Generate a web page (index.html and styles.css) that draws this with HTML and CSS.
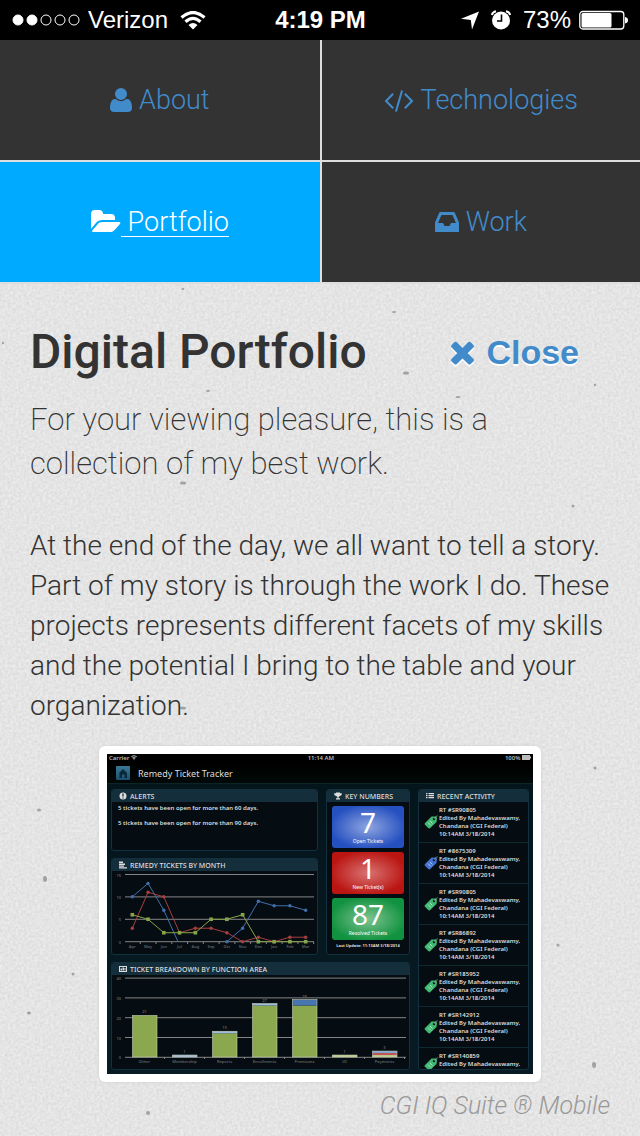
FILE: index.html
```
<!DOCTYPE html>
<html lang="en">
<head>
<meta charset="utf-8">
<meta name="viewport" content="width=device-width, initial-scale=1">
<title>Digital Portfolio</title>
<link rel="stylesheet" href="styles.css">
</head>
<body>
<div class="status">
  <div class="status-left">
    <svg class="signal" viewBox="0 0 68 12" width="68" height="12" aria-hidden="true">
      <g fill="#fff" stroke="#fff"><circle cx="6" cy="6" r="5"/><circle cx="20" cy="6" r="5"/><g fill="none"><circle cx="34" cy="6" r="5"/><circle cx="48" cy="6" r="5"/><circle cx="62" cy="6" r="5"/></g></g>
    </svg>
    <span>Verizon</span>
    <svg class="wifi" viewBox="0 0 26 19" width="26" height="19" aria-hidden="true">
      <path d="M1.5 6.5Q13-3.5 24.500 6.500M5.500 10.700Q13 4 20.500 10.700" fill="none" stroke="#fff" stroke-width="3.200"/>
      <path d="M8.500 14Q13 10 17.500 14L13 18.500Z" fill="#fff"/>
    </svg>
  </div>
  <strong class="time">4:19 PM</strong>
  <div class="status-right">
    <svg viewBox="0 0 18 19" width="18" height="19" aria-hidden="true"><path d="M18 .5L11 18.500L9.800 9L0 7.700Z" fill="#fff"/></svg>
    <svg class="alarm" viewBox="0 0 20 20" width="20" height="20" aria-hidden="true"><circle cx="10" cy="10.500" r="9" fill="#fff"/><path d="M.8 5Q1.500 2 5 1.200M19.200 5Q18.500 2 15 1.200" fill="none" stroke="#fff" stroke-width="2"/><path d="M10.500 4.500V11H6" fill="none" stroke="#000" stroke-width="1.600"/></svg>
    <span>73%</span>
    <svg class="battery" viewBox="0 0 50 20" width="50" height="20" aria-hidden="true"><rect x=".8" y="1.500" width="44" height="17.500" rx="3" fill="none" stroke="#fff" stroke-width="1.300"/><rect x="2.500" y="3" width="30" height="14.500" rx="1.500" fill="#fff"/><path d="M46 7q3 .5 3 3.200t-3 3.300z" fill="#fff"/></svg>
  </div>
</div>

<nav class="nav">
  <a href="#about"><svg width="22" height="24" viewBox="0 -1408 1408 1536" aria-hidden="true"><path transform="scale(1 -1)" d="M1408 131q0 -120 -73 -189.500t-194 -69.500h-874q-121 0 -194 69.500t-73 189.500q0 53 3.500 103.500t14 109t26.500 108.500t43 97.500t62 81t85.500 53.500t111.500 20q9 0 42 -21.500t74.500 -48t108 -48t133.500 -21.500t133.500 21.500t108 48t74.500 48t42 21.500q61 0 111.500 -20t85.500 -53.500t62 -81t43 -97.500t26.500 -108.500t14 -109t3.500 -103.500zM1088 1024q0 -159 -112.500 -271.500t-271.500 -112.500t-271.500 112.500t-112.500 271.500t112.500 271.500t271.500 112.500t271.500 -112.500t112.500 -271.500z"/></svg><span>&nbsp;About</span></a>
  <a href="#technologies"><svg width="30" height="24" viewBox="0 -1408 1920 1536" aria-hidden="true"><path transform="scale(1 -1)" d="M617 137l-50 -50q-10 -10 -23 -10t-23 10l-466 466q-10 10 -10 23t10 23l466 466q10 10 23 10t23 -10l50 -50q10 -10 10 -23t-10 -23l-393 -393l393 -393q10 -10 10 -23t-10 -23zM1208 1204l-373 -1291q-4 -13 -15.500 -19.500t-23.500 -2.500l-62 17q-13 4 -19.500 15.500t-2.500 24.500l373 1291q4 13 15.500 19.500t23.500 2.500l62 -17q13 -4 19.500 -15.500t2.500 -24.500zM1865 553l-466 -466q-10 -10 -23 -10t-23 10l-50 50q-10 10 -10 23t10 23l393 393l-393 393q-10 10 -10 23t10 23l50 50q10 10 23 10t23 -10l466 -466q10 -10 10 -23t-10 -23z"/></svg><span>&nbsp;Technologies</span></a>
  <a href="#portfolio" class="active" aria-current="page"><svg width="30" height="24" viewBox="0 -1408 1920 1536" aria-hidden="true"><path transform="scale(1 -1)" d="M1879 584q0 -31 -31 -66l-336 -396q-43 -51 -120.500 -86.500t-143.500 -35.500h-1088q-34 0 -60.500 13t-26.500 43q0 31 31 66l336 396q43 51 120.500 86.500t143.500 35.500h1088q34 0 60.500 -13t26.500 -43zM1536 928v-160h-832q-94 0 -197 -47.500t-164 -119.500l-337 -396l-5 -6q0 4 -.5 12.500t-.5 12.500v960q0 92 66 158t158 66h320q92 0 158 -66t66 -158v-32h544q92 0 158 -66t66 -158z"/></svg><span>&nbsp;Portfolio</span></a>
  <a href="#work"><svg width="24" height="24" viewBox="0 -1408 1536 1536" aria-hidden="true"><path transform="scale(1 -1)" d="M1023 576h316q-1 3 -2.500 8t-2.500 8l-212 496h-708l-212 -496q-1 -2 -2.500 -8t-2.500 -8h316l95 -192h320zM1536 546v-482q0 -26 -19 -45t-45 -19h-1408q-26 0 -45 19t-19 45v482q0 62 25 123l238 552q10 25 36.500 42t52.500 17h832q26 0 52.500 -17t36.500 -42l238 -552q25 -61 25 -123z"/></svg><span>&nbsp;Work</span></a>
</nav>

<main class="page">
  <svg class="paper" width="100%" height="100%" aria-hidden="true">
    <filter id="grain" x="0" y="0" width="100%" height="100%" color-interpolation-filters="sRGB"><feTurbulence type="fractalNoise" baseFrequency=".37" numOctaves="2" seed="4"/><feColorMatrix values=".11 0 0 0 .84  .11 0 0 0 .84  .11 0 0 0 .84  0 0 0 0 1"/></filter>
    <rect width="100%" height="100%" filter="url(#grain)"/>
    <g fill="#777" fill-opacity=".6"><ellipse cx="183" cy="5" rx="1.500" ry="1"/><ellipse cx="394" cy="28" rx="2" ry="1"/><circle cx="3" cy="59" r="1.200"/><ellipse cx="406" cy="89" rx="3" ry="1.500"/><ellipse cx="208" cy="107" rx="2" ry="1"/><ellipse cx="458" cy="113" rx="2.500" ry="1"/><circle cx="595" cy="101" r="1.200"/><ellipse cx="183" cy="199" rx="3" ry="1.500"/><circle cx="573" cy="222" r="1.500"/><ellipse cx="183" cy="424" rx="3" ry="1.500"/><ellipse cx="39" cy="526" rx="2" ry="1.500"/><ellipse cx="45" cy="595" rx="2" ry="3"/><circle cx="595" cy="484" r="1.500"/><ellipse cx="29" cy="729" rx="2" ry="1.500"/><circle cx="73" cy="690" r="1.500"/><ellipse cx="594" cy="781" rx="2" ry="3"/><circle cx="148" cy="829" r="2"/><circle cx="558" cy="661" r="1.500"/></g>
  </svg>
  <header class="head">
    <h1>Digital Portfolio</h1>
    <a class="close" href="#top"><svg width="27" height="30" viewBox="0 -1408 1408 1536" aria-hidden="true"><path transform="scale(1 -1)" d="M1298 214q0 -40 -28 -68l-136 -136q-28 -28 -68 -28t-68 28l-294 294l-294 -294q-28 -28 -68 -28t-68 28l-136 136q-28 28 -28 68t28 68l294 294l-294 294q-28 28 -28 68t28 68l136 136q28 28 68 28t68 -28l294 -294l294 294q28 28 68 28t68 -28l136 -136q28 -28 28 -68t-28 -68l-294 -294l294 -294q28 -28 28 -68z"/></svg><span>Close</span></a>
  </header>
  <p class="lead">For your viewing pleasure, this is a collection of my best work.</p>
  <p class="text">At the end of the day, we all want to tell a story. Part of my story is through the work I do. These projects represents different facets of my skills and the potential I bring to the table and your organization.</p>

  <figure class="shot">
    <div class="frame">
      <div class="tablet">
        <div class="t-status"><span>Carrier <svg width="6" height="5" viewBox="0 0 26 19" aria-hidden="true"><path d="M1 6Q13-4 25 6M6 11Q13 4 20 11" fill="none" stroke="#bbb" stroke-width="4"/><path d="M8 14Q13 10 18 14L13 19Z" fill="#bbb"/></svg></span><span>11:14 AM</span><span>100% <svg width="9" height="5" viewBox="0 0 9 5" aria-hidden="true"><path d="M0 0h8v1.500h1v2h-1V5H0z" fill="#bbb"/></svg></span></div>
        <div class="t-title"><svg width="14" height="14" viewBox="0 0 14 14" aria-hidden="true"><defs><linearGradient id="hg" x2="0" y2="1"><stop stop-color="#3a7896"/><stop offset="1" stop-color="#1d5070"/></linearGradient></defs><rect width="14" height="14" rx="1" fill="url(#hg)"/><path d="M3 7L7 3L11 7V12H8.500V8.500H6V12H3.500V7Z" fill="#0a2a3c"/></svg><span>Remedy Ticket Tracker</span></div>
        <div class="board">
          <section class="panel alerts">
            <h2><svg viewBox="0 0 8 8"><circle cx="4" cy="4" r="3.500"/><path d="M4 1.500V4.500M4 5.500V6.500" stroke="#15303f" stroke-width="1.300"/></svg>ALERTS</h2>
            <p>5 tickets have been open for more than 60 days.</p>
            <p>5 tickets have been open for more than 90 days.</p>
          </section>
          <section class="panel keys">
            <h2><svg viewBox="0 0 8 8"><path d="M2 .5H6V1.200H8Q8 3.500 5.500 4.300L4.600 5V6.300H6V7.500H2V6.300H3.400V5L2.500 4.300Q0 3.500 0 1.200H2Z"/></svg>KEY NUMBERS</h2>
            <div class="tiles">
              <div class="tile blue"><b>7</b><span>Open Tickets</span></div>
              <div class="tile red"><b>1</b><span>New Ticket(s)</span></div>
              <div class="tile green"><b>87</b><span>Resolved Tickets</span></div>
            </div>
            <small>Last Update: 11:13AM 3/18/2014</small>
          </section>
          <section class="panel recent">
            <h2><svg viewBox="0 0 8 8"><path d="M0 1H1.500V2.200H0ZM2.500 1H8V2.200H2.500ZM0 3H1.500V4.200H0ZM2.500 3H8V4.200H2.500ZM0 5H1.500V6.200H0ZM2.500 5H8V6.200H2.500Z"/></svg>RECENT ACTIVITY</h2>
            <svg class="defs" width="0" height="0" aria-hidden="true"><symbol id="tag" viewBox="0 0 14 14"><path d="M1 8L7.500 1.500L12 1.500L13 3L12.500 7L6 13.300Q5 13.800 4.200 13L1 9.800Q0 9 1 8Z"/><circle cx="10" cy="4" r="1.200" fill="#08181c"/><path d="M10 4Q12 .5 13.800 .8" fill="none" stroke="#9bb" stroke-width=".6"/><path d="M4 7.500L7 10.500M6 6L8.500 8.500" stroke="#fff" stroke-opacity=".6"/></symbol></svg>
            <ul>
              <li><svg class="tag"><use href="#tag"/></svg><span>RT #SR90805<br>Edited By Mahadevaswamy,<br>Chandana (CGI Federal)<br>10:14AM 3/18/2014</span></li>
              <li><svg class="tag alt"><use href="#tag"/></svg><span>RT #8675309<br>Edited By Mahadevaswamy,<br>Chandana (CGI Federal)<br>10:14AM 3/18/2014</span></li>
              <li><svg class="tag"><use href="#tag"/></svg><span>RT #SR90805<br>Edited By Mahadevaswamy,<br>Chandana (CGI Federal)<br>10:14AM 3/18/2014</span></li>
              <li><svg class="tag"><use href="#tag"/></svg><span>RT #SR86892<br>Edited By Mahadevaswamy,<br>Chandana (CGI Federal)<br>10:14AM 3/18/2014</span></li>
              <li><svg class="tag"><use href="#tag"/></svg><span>RT #SR185952<br>Edited By Mahadevaswamy,<br>Chandana (CGI Federal)<br>10:14AM 3/18/2014</span></li>
              <li><svg class="tag"><use href="#tag"/></svg><span>RT #SR142912<br>Edited By Mahadevaswamy,<br>Chandana (CGI Federal)<br>10:14AM 3/18/2014</span></li>
              <li><svg class="tag"><use href="#tag"/></svg><span>RT #SR140859<br>Edited By Mahadevaswamy,<br>Chandana (CGI Federal)</span></li>
            </ul>
          </section>
          <section class="panel months">
            <h2><svg viewBox="0 0 8 8"><path d="M0 .5H4V2H0ZM0 2.500H6V4H0ZM0 4.500H5V5.800H0ZM0 6.200H8V7.500H0Z"/></svg>REMEDY TICKETS BY MONTH</h2>
            <svg id="line-chart" class="chart" viewBox="0 0 205 82" role="img" aria-label="Remedy tickets by month"></svg>
          </section>
          <section class="panel areas">
            <h2><svg viewBox="0 0 8 8"><path fill-rule="evenodd" d="M0 1H8V7H0ZM1 2V6H7V2ZM1.500 5.500V3.500H3V5.500ZM3.500 5.500V2.500H5V5.500ZM5.500 5.500V3H6.500V5.500Z"/></svg>TICKET BREAKDOWN BY FUNCTION AREA</h2>
            <svg id="bar-chart" class="chart" viewBox="0 0 297 93" role="img" aria-label="Ticket breakdown by function area"></svg>
          </section>
        </div>
      </div>
    </div>
    <figcaption>CGI IQ Suite ® Mobile</figcaption>
  </figure>
</main>
<script src="charts.js"></script>
</body>
</html>
```
FILE: charts.js
```
const NS = 'http://www.w3.org/2000/svg';

function add(parent, name, attrs, text) {
  const el = document.createElementNS(NS, name);
  Object.entries(attrs).forEach(([key, value]) => el.setAttribute(key, value));
  if (text !== undefined) el.textContent = text;
  parent.appendChild(el);
}

function drawGrid(svg, base, step, labels, right) {
  labels.forEach((label, i) => {
    const y = base - i * step;
    add(svg, 'line', { x1: 13, x2: right, y1: y, y2: y, class: 'rule' });
    add(svg, 'text', { x: 9, y: y + 2, class: 'tick end' }, label);
  });
}

const line = document.getElementById('line-chart');
const months = ['Apr', 'May', 'Jun', 'Jul', 'Aug', 'Sep', 'Oct', 'Nov', 'Dec', 'Jan', 'Feb', 'Mar'];
const px = i => 20.3 + i * 15.76;
const py = v => 70.7 - v * 4.49;
drawGrid(line, 70.7, 22.4, [0, 5, 10, 15], 202);
months.forEach((m, i) => {
  add(line, 'text', { x: px(i), y: 77, class: 'tick' }, m);
  add(line, 'line', { x1: px(i) + 8, x2: px(i) + 8, y1: 71, y2: 73, class: 'rule' });
});
const series = [
  { color: '#416fae', runs: [[[0, 10], [1, 13], [2, 7], [2.9, 0]], [[6, 0], [7, 3], [8, 9], [9, 8], [10, 8], [11, 7]]] },
  { color: '#a93f40', runs: [[3, 11, 10, 2, 3, 3, 2, 0, 1, 0, 1, 1].map((v, i) => [i, v])] },
  { color: '#88a54a', square: true, runs: [[6, 5, 2, 2, 2, 5, 5, 6, 0, 0, 0, 0].map((v, i) => [i, v])] }
];
series.forEach(s => s.runs.forEach(run => {
  add(line, 'polyline', { points: run.map(([i, v]) => px(i) + ',' + py(v)).join(' '), fill: 'none', stroke: s.color });
  run.filter(([i]) => Number.isInteger(i)).forEach(([i, v]) => {
    if (s.square) add(line, 'rect', { x: px(i) - 1.8, y: py(v) - 1.8, width: 3.6, height: 3.6, fill: s.color });
    else add(line, 'circle', { cx: px(i), cy: py(v), r: 1.7, fill: s.color });
  });
}));

const bars = document.getElementById('bar-chart');
const green = '#8ba84e', blue = '#4775b0', pale = '#9dbbe0', red = '#c65454';
const areas = [
  ['Other', 21, [[21, green]]],
  ['Membership', 1, [[1, pale]]],
  ['Reports', 13, [[12, green], [1, pale]]],
  ['Enrollments', 27, [[26, green], [1, pale]]],
  ['Premiums', 29, [[26, green], [3, blue]]],
  ['UI', 1, [[1, '#bccb8c']]],
  ['Payments', 3, [[1, '#bccb8c'], [1, red], [1, '#7da2d3']]]
];
drawGrid(bars, 82.3, 19.8, [0, 10, 20, 30, 40], 294);
areas.forEach(([name, total, parts], i) => {
  const x = 20.5 + i * 40;
  let y = 82;
  parts.forEach(([v, fill]) => {
    y -= v * 1.98;
    add(bars, 'rect', { x, y, width: 24.5, height: v * 1.98, fill });
  });
  add(bars, 'rect', { x, y, width: 24.5, height: 82 - y, fill: 'none', stroke: '#c5ccb5', 'stroke-width': 0.6 });
  add(bars, 'text', { x: x + 12, y: y - 2, class: 'tick' }, total);
  add(bars, 'text', { x: x + 12, y: 88, class: 'tick' }, name);
  add(bars, 'line', { x1: x + 32, x2: x + 32, y1: 82, y2: 84, class: 'rule' });
});
```
FILE: styles.css
```
* { box-sizing: border-box; }
body { margin: 0; background: #e4e4e4; color: #333; font-family: Roboto, "Liberation Sans", sans-serif; font-weight: 300; }
h1, h2, p, ul, figure { margin: 0; padding: 0; }
a { color: #428bca; text-decoration: none; }
svg { flex: none; }

.status { display: grid; grid-template-columns: 1fr auto 1fr; align-items: center; height: 40px; padding: 0 11px 0 12px; background: #000; color: #fff; font: 400 24px "Liberation Sans", sans-serif; }
.status-left, .status-right { display: flex; align-items: center; }
.status-left { gap: 8px; }
.wifi { margin-left: 4px; }
.status-right { justify-content: flex-end; gap: 12px; }
.battery { margin-left: -4px; }
.time { font-weight: 700; }

.nav { display: grid; grid-template-columns: 1fr 1fr; }
.nav a { display: flex; align-items: center; justify-content: center; height: 122px; border-bottom: 2px solid #dedede; background: #333; font-size: 27px; line-height: 28px; }
.nav a:nth-child(even) { border-left: 2px solid #dedede; }
.nav svg { fill: currentColor; }
.nav .active { background: #0af; color: #fff; }
.nav .active span { border-bottom: 1px solid #fff; }

.page { position: relative; padding: 40px 30px 16px; overflow: hidden; }
.paper { position: absolute; inset: 0; z-index: -1; }
.head { display: flex; align-items: center; justify-content: space-between; padding-right: 31px; line-height: 56px; }
h1 { font-size: 48px; font-weight: 500; }
.close { display: flex; align-items: center; gap: 10px; font: 700 34px "Liberation Sans", sans-serif; text-shadow: 0 2px 0 #fff; }
.close svg { fill: currentColor; filter: drop-shadow(0 2px 0 #fff); }
.lead { margin-top: 18px; font-size: 31px; font-weight: 200; line-height: 44px; }
.text { margin-top: 40px; font-size: 28px; line-height: 40px; }

.shot { display: flex; flex-direction: column; align-items: center; margin-top: 20px; }
.frame { width: 442px; max-width: 100%; padding: 8px; border-radius: 6px; background: #fff; box-shadow: 0 0 3px #ccc; }
figcaption { align-self: flex-end; margin-top: 8px; color: #999; font-size: 25px; font-style: italic; line-height: 32px; }

.tablet { overflow: hidden; background: #07141b; color: #ddd; font-family: "Noto Sans", "Open Sans", sans-serif; font-size: 6px; font-weight: 600; }
.t-status { display: flex; justify-content: space-between; height: 9px; padding: 0 2px; background: #000; color: #bbb; line-height: 9px; }
.t-title { display: flex; align-items: center; gap: 8px; height: 21px; padding-left: 9px; border-bottom: 1px solid #0b2527; background: linear-gradient(#000, #020908); font-size: 9px; font-weight: 400; }
.board { display: grid; grid-template-columns: 207fr 84fr 111fr; grid-template-rows: 62px 97px 108px; grid-template-areas: "alerts keys recent" "months keys recent" "areas areas recent"; gap: 7px 8px; padding: 5px 4px 4px; background: linear-gradient(#04151c, #081b24); }
.panel { min-width: 0; overflow: hidden; border: 1px solid #12303e; border-radius: 3px; background: #050d12; }
.alerts { grid-area: alerts; }
.keys { grid-area: keys; }
.recent { grid-area: recent; }
.months { grid-area: months; }
.areas { grid-area: areas; }
.panel h2 { display: flex; align-items: center; gap: 3px; height: 12px; padding-left: 7px; background: #142e3c; font-size: 7px; font-weight: 500; white-space: nowrap; }
.panel h2 svg { width: 8px; height: 8px; fill: #ddd; }
.alerts p { padding: 2px 6px 4px; line-height: 9px; white-space: nowrap; }
.tiles { display: grid; gap: 4px; padding: 4px 5px 3px; }
.tile { display: flex; flex-direction: column; align-items: center; height: 42px; border-radius: 3px; color: #fff; white-space: nowrap; }
.tile b { font-size: 28px; font-weight: 400; line-height: 32px; }
.tile span { font-size: 5px; font-weight: 400; line-height: 6px; }
.blue { background: radial-gradient(#8fa5e0, #2550c0 75%); }
.red { background: radial-gradient(#d77472, #bb1512 75%); }
.green { background: radial-gradient(#7fc490, #119240 75%); }
.keys small { display: block; font-size: 4px; font-weight: 700; line-height: 6px; text-align: center; white-space: nowrap; }
.defs { position: absolute; }
.recent { height: 281px; }
.recent ul { list-style: none; }
.recent li { display: flex; align-items: center; gap: 1px; padding: 4px 0 4px 5px; border-bottom: 1px solid #0e2a31; line-height: 8px; white-space: nowrap; }
.tag { width: 14px; height: 14px; fill: #3fb871; }
.tag.alt { fill: #4472d4; }
.chart { display: block; width: 100%; }
.rule { stroke: #858585; stroke-width: 1; }
.tick { fill: #626262; font-size: 4px; text-anchor: middle; }
.tick.end { text-anchor: end; }
```
